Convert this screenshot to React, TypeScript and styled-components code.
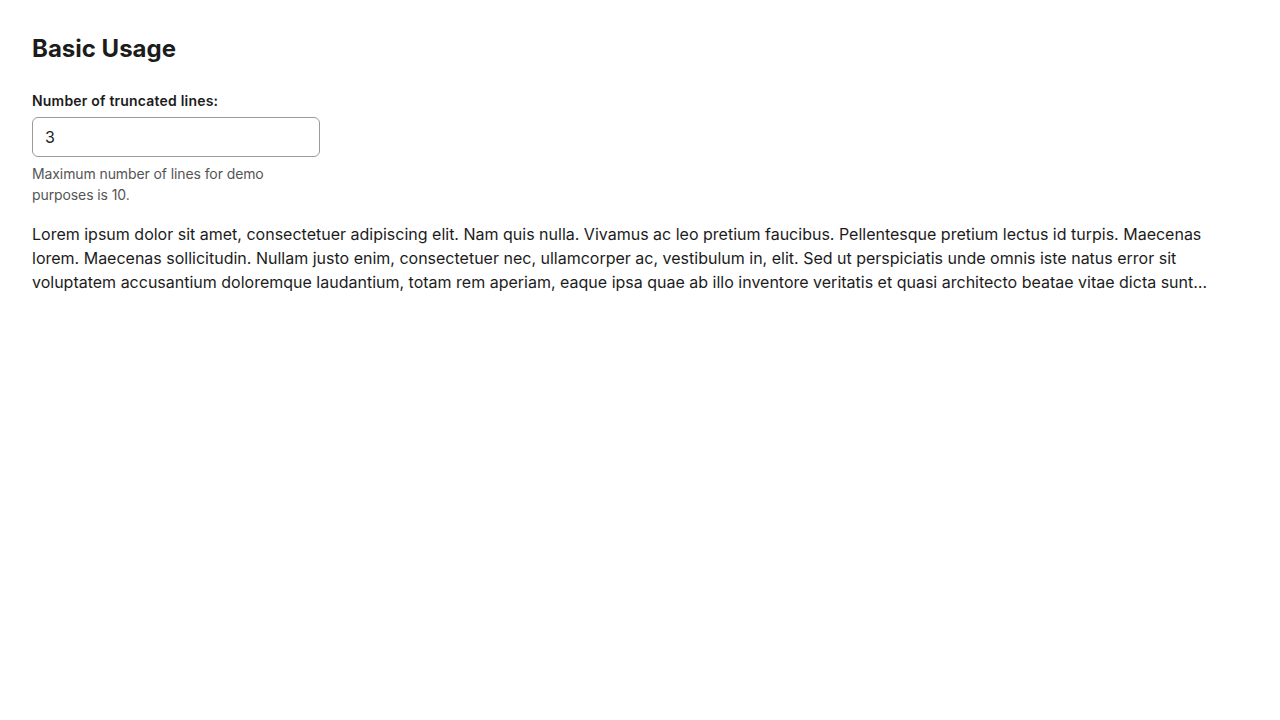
import React, { useState } from "react";
import styled, { createGlobalStyle } from "styled-components";

const Global = createGlobalStyle`
  html, body { margin: 0; padding: 0; background: #fff; }
  body { font-family: Inter, "Noto Sans", sans-serif; color: #1f1f1f; }
  * { box-sizing: border-box; }
`;

const Page = styled.div`
  padding: 32px;
  display: flex;
  flex-direction: column;
`;

const Heading = styled.h2`
  margin: 0 0 25px 0;
  font-size: 24px;
  line-height: 34px;
  font-weight: 700;
  color: #1c1c1c;
`;

const Field = styled.div`
  width: 288px;
  display: flex;
  flex-direction: column;
`;

const Label = styled.label`
  font-size: 14px;
  line-height: 20px;
  font-weight: 600;
  letter-spacing: 0.2px;
  color: #1c1c1c;
  margin-bottom: 6px;
`;

const Input = styled.input`
  height: 40px;
  width: 100%;
  border: 1px solid #9a9a9a;
  border-radius: 6px;
  padding: 0 12px;
  font-family: Inter, sans-serif;
  font-size: 16px;
  color: #1c1c1c;
  outline: none;
`;

const Helper = styled.div`
  margin-top: 6px;
  font-size: 14px;
  line-height: 21px;
  letter-spacing: -0.1px;
  color: #555;
`;

const Clamp = styled.p<{ $lines: number }>`
  margin: 17px 0 0 0;
  font-size: 16px;
  line-height: 24px;
  color: #1c1c1c;
  display: -webkit-box;
  -webkit-box-orient: vertical;
  -webkit-line-clamp: ${(p) => p.$lines};
  overflow: hidden;
`;

const TEXT =
  "Lorem ipsum dolor sit amet, consectetuer adipiscing elit. Nam quis nulla. Vivamus ac leo pretium faucibus. Pellentesque pretium lectus id turpis. Maecenas lorem. Maecenas sollicitudin. Nullam justo enim, consectetuer nec, ullamcorper ac, vestibulum in, elit. Sed ut perspiciatis unde omnis iste natus error sit voluptatem accusantium doloremque laudantium, totam rem aperiam, eaque ipsa quae ab illo inventore veritatis et quasi architecto beatae vitae dicta sunt explicabo. Nemo enim ipsam voluptatem quia voluptas sit aspernatur aut odit aut fugit, sed quia consequuntur magni dolores eos qui ratione voluptatem sequi nesciunt.";

export default function App() {
  const [lines, setLines] = useState("3");
  const n = Math.max(1, Math.min(10, parseInt(lines, 10) || 1));
  return (
    <>
      <Global />
      <Page>
        <Heading>Basic Usage</Heading>
        <Field>
          <Label htmlFor="lines">Number of truncated lines:</Label>
          <Input id="lines" value={lines} onChange={(e) => setLines(e.target.value)} />
          <Helper>Maximum number of lines for demo purposes is 10.</Helper>
        </Field>
        <Clamp $lines={n}>{TEXT}</Clamp>
      </Page>
    </>
  );
}
